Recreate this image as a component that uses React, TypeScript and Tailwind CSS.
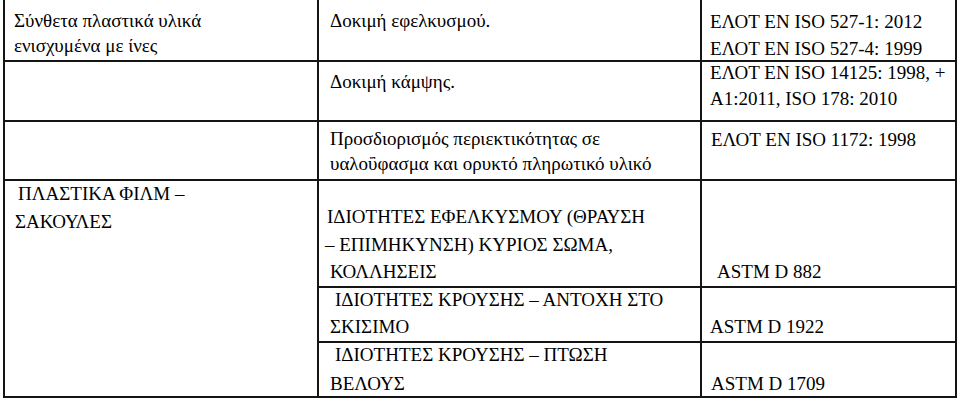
type Line = { text: string; indent?: string };

const serifFace = { fontFamily: 'Liberation Serif' };

function Lines({ lines, className = '' }: { lines: Line[]; className?: string }) {
  return (
    <div className={className}>
      {lines.map((l, i) => (
        <div key={i} className={`whitespace-nowrap font-['Liberation_Serif'] ${l.indent ?? ''}`} style={serifFace}>
          {l.text}
        </div>
      ))}
    </div>
  );
}

export default function App() {
  return (
    <div className="w-[960px] bg-white p-0 text-[19px] leading-[27px] text-black">
      <div className="ml-[3px] grid w-[954px] grid-cols-[314px_383px_253px] grid-rows-[62px_60px_59px_107px_55px_55px] border-x-2 border-[#151515]">
        {/* row A */}
        <div className="border-r-2 border-b-2 border-[#151515] pl-[9px] pt-[8px] leading-[25px]">
          <Lines lines={[{ text: 'Σύνθετα πλαστικά υλικά' }, { text: 'ενισχυμένα με ίνες' }]} />
        </div>
        <div className="border-r-2 border-b-2 border-[#151515] pl-[11px] pt-[7px]">
          <Lines lines={[{ text: 'Δοκιμή εφελκυσμού.' }]} />
        </div>
        <div className="border-b-2 border-[#151515] pl-[8px] pt-[8px]">
          <Lines lines={[{ text: 'ΕΛΟΤ EN ISO 527-1: 2012' }, { text: 'ΕΛΟΤ EN ISO 527-4: 1999' }]} />
        </div>

        {/* row B */}
        <div className="border-r-2 border-b-2 border-[#151515]" />
        <div className="border-r-2 border-b-2 border-[#151515] pl-[11px] pt-[6px]">
          <Lines lines={[{ text: 'Δοκιμή κάμψης.' }]} />
        </div>
        <div className="border-b-2 border-[#151515] pl-[8px] leading-[26px]">
          <Lines className="-mt-[2px]" lines={[{ text: 'ΕΛΟΤ EN ISO 14125: 1998, +' }, { text: 'A1:2011, ISO 178: 2010' }]} />
        </div>

        {/* row C */}
        <div className="border-r-2 border-b-2 border-[#151515]" />
        <div className="border-r-2 border-b-2 border-[#151515] pl-[11px] pt-[4px] leading-[25px]">
          <Lines lines={[{ text: 'Προσδιορισμός περιεκτικότητας  σε' }, { text: 'υαλοΰφασμα και ορυκτό πληρωτικό υλικό' }]} />
        </div>
        <div className="border-b-2 border-[#151515] pl-[9px] pt-[4px]">
          <Lines lines={[{ text: 'ΕΛΟΤ EN ISO 1172: 1998' }]} />
        </div>

        {/* rows D-F */}
        <div className="row-span-3 border-r-2 border-b-2 border-[#151515] pl-[9px] leading-[28px]">
          <Lines className="-mt-[1px]" lines={[{ text: 'ΠΛΑΣΤΙΚΑ ΦΙΛΜ –', indent: 'ml-[4px]' }, { text: 'ΣΑΚΟΥΛΕΣ', indent: 'ml-[1px]' }]} />
        </div>
        <div className="border-r-2 border-b-2 border-[#151515] pl-[11px] pt-[22px] leading-[27.5px]">
          <Lines
            lines={[
              { text: 'ΙΔΙΟΤΗΤΕΣ ΕΦΕΛΚΥΣΜΟΥ (ΘΡΑΥΣΗ', indent: '-ml-[3px]' },
              { text: '– ΕΠΙΜΗΚΥΝΣΗ) ΚΥΡΙΟΣ ΣΩΜΑ,', indent: '-ml-[5px]' },
              { text: 'ΚΟΛΛΗΣΕΙΣ' },
            ]}
          />
        </div>
        <div className="border-b-2 border-[#151515] pl-[15px] pt-[77px]">
          <Lines lines={[{ text: 'ASTM D 882' }]} />
        </div>

        <div className="border-r-2 border-b-2 border-[#151515] pl-[11px]">
          <Lines className="-mt-[2px]" lines={[{ text: 'ΙΔΙΟΤΗΤΕΣ ΚΡΟΥΣΗΣ – ΑΝΤΟΧΗ ΣΤΟ', indent: 'ml-[5px]' }, { text: 'ΣΚΙΣΙΜΟ' }]} />
        </div>
        <div className="border-b-2 border-[#151515] pl-[8px] pt-[25px]">
          <Lines lines={[{ text: 'ASTM D 1922' }]} />
        </div>

        <div className="border-r-2 border-b-2 border-[#151515] pl-[11px] leading-[29px]">
          <Lines className="-mt-[3px]" lines={[{ text: 'ΙΔΙΟΤΗΤΕΣ ΚΡΟΥΣΗΣ – ΠΤΩΣΗ', indent: 'ml-[5px]' }, { text: 'ΒΕΛΟΥΣ' }]} />
        </div>
        <div className="border-b-2 border-[#151515] pl-[9px] pt-[27px]">
          <Lines lines={[{ text: 'ASTM D 1709' }]} />
        </div>
      </div>
    </div>
  );
}
